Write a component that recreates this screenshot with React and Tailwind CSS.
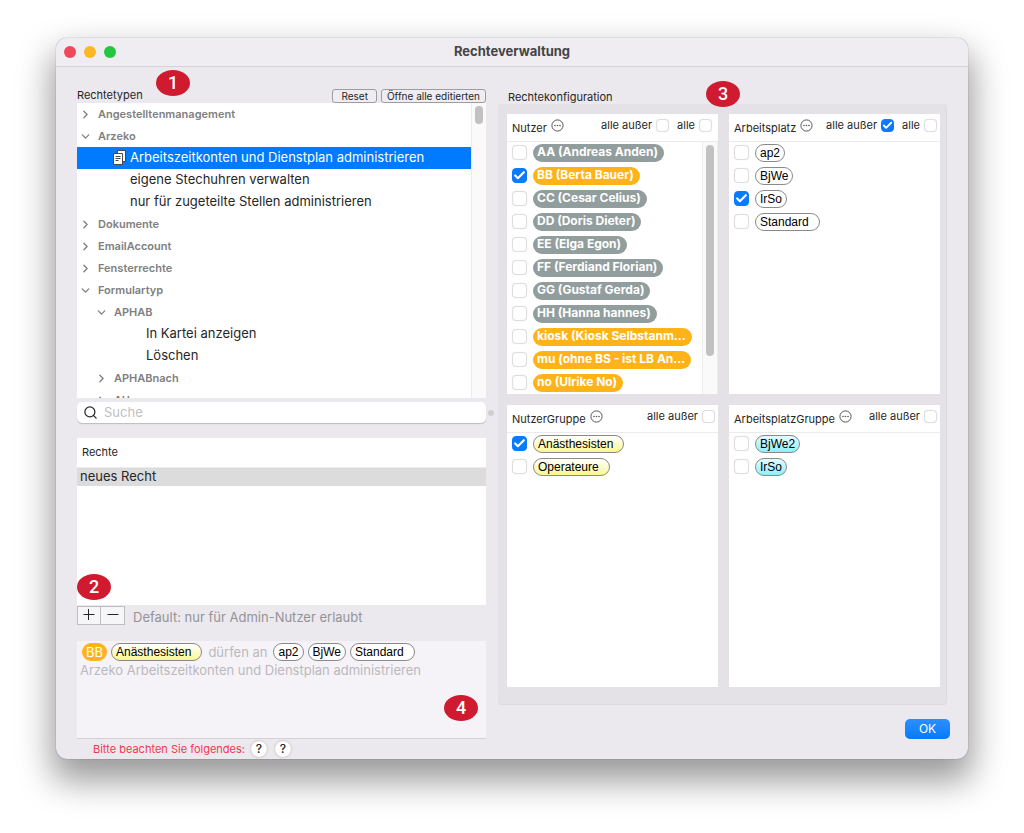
import { useState } from 'react'
import clsx from 'clsx'
import { Check, ChevronDown, ChevronRight, Search } from 'lucide-react'

const TREE = [
  { id: 'angestellte', label: 'Angestelltenmanagement', level: 0 },
  { id: 'arzeko', label: 'Arzeko', level: 0, open: true },
  { id: 'arbeitszeit', label: 'Arbeitszeitkonten und Dienstplan administrieren', level: 1, leaf: true, edited: true },
  { id: 'stechuhren', label: 'eigene Stechuhren verwalten', level: 1, leaf: true },
  { id: 'stellen', label: 'nur für zugeteilte Stellen administrieren', level: 1, leaf: true },
  { id: 'dokumente', label: 'Dokumente', level: 0 },
  { id: 'email', label: 'EmailAccount', level: 0 },
  { id: 'fenster', label: 'Fensterrechte', level: 0 },
  { id: 'formular', label: 'Formulartyp', level: 0, open: true },
  { id: 'aphab', label: 'APHAB', level: 1, open: true },
  { id: 'kartei', label: 'In Kartei anzeigen', level: 2, leaf: true },
  { id: 'loeschen', label: 'Löschen', level: 2, leaf: true },
  { id: 'aphabnach', label: 'APHABnach', level: 1 },
  { id: 'au', label: 'AU', level: 1 }
]

const NUTZER = [
  { label: 'AA (Andreas Anden)', tone: 'gray' },
  { label: 'BB (Berta Bauer)', tone: 'orange', checked: true },
  { label: 'CC (Cesar Celius)', tone: 'gray' },
  { label: 'DD (Doris Dieter)', tone: 'gray' },
  { label: 'EE (Elga Egon)', tone: 'gray' },
  { label: 'FF (Ferdiand Florian)', tone: 'gray' },
  { label: 'GG (Gustaf Gerda)', tone: 'gray' },
  { label: 'HH (Hanna hannes)', tone: 'gray' },
  { label: 'kiosk (Kiosk Selbstanm...', tone: 'orange' },
  { label: 'mu (ohne BS - ist LB An...', tone: 'orange' },
  { label: 'no (Ulrike No)', tone: 'orange' }
]

const ARBEITSPLATZ = [
  { label: 'ap2', tone: 'white' },
  { label: 'BjWe', tone: 'white' },
  { label: 'IrSo', tone: 'white', checked: true },
  { label: 'Standard', tone: 'white', wide: true }
]

const NUTZER_GRUPPE = [
  { label: 'Anästhesisten', tone: 'yellow', wide: true, checked: true },
  { label: 'Operateure', tone: 'yellow', wide: true }
]

const ARBEITSPLATZ_GRUPPE = [
  { label: 'BjWe2', tone: 'cyan' },
  { label: 'IrSo', tone: 'cyan' }
]

const TONES = {
  gray: 'pr-1.5 pb-px bg-[#929e9d] text-white font-bold',
  orange: 'pr-1.5 pb-px bg-[#ffb319] text-white font-bold',
  white: 'bg-white border border-[#8a8a8a] text-black font-["Liberation_Sans",sans-serif]',
  yellow: 'bg-linear-to-b from-white to-[#fbf68f] border border-[#8a8a8a] text-black font-["Liberation_Sans",sans-serif]',
  cyan: 'bg-linear-to-b from-[#e4fbff] to-[#8ceffb] border border-[#8a8a8a] text-black font-["Liberation_Sans",sans-serif]'
}

const Chip = ({ label, tone, wide }) => (
  <span
    className={clsx(
      'inline-flex items-center h-[18px] px-1 rounded-full text-xs whitespace-nowrap shrink-0',
      TONES[tone],
      wide && 'pr-2.5'
    )}
  >
    {label}
  </span>
)

const Checkbox = ({ label, small, ...props }) => (
  <span className={clsx('relative inline-flex shrink-0', small ? 'size-[13px]' : 'size-[15px]')}>
    <input
      type="checkbox"
      aria-label={label}
      className="peer appearance-none size-full rounded-[4px] bg-white border border-[#dedede] shadow-[0_0_1px_#00000022] checked:bg-[#0a7aff] checked:border-[#0a7aff]"
      {...props}
    />
    <Check strokeWidth={4} className="absolute inset-0 size-full p-px text-white pointer-events-none hidden peer-checked:block" />
  </span>
)

const MoreIcon = () => (
  <svg viewBox="0 0 13 13" className="size-[13px] text-[#555]" fill="none" stroke="currentColor">
    <circle cx="6.5" cy="6.5" r="5.6" />
    <g fill="currentColor" stroke="none">
      <circle cx="4" cy="6.5" r="0.8" />
      <circle cx="6.5" cy="6.5" r="0.8" />
      <circle cx="9" cy="6.5" r="0.8" />
    </g>
  </svg>
)

const DocsIcon = () => (
  <svg viewBox="0 0 13 15" className="w-[13px] h-[15px]" fill="white" stroke="#4a4a4a">
    <path d="M4.500 .5h8v11h-8z" />
    <path d="M.5 3.500h9v11h-9z" />
    <path d="M2.500 6.500h5M2.500 8.500h5M2.500 10.500h3" />
  </svg>
)

const Badge = ({ n, className }) => (
  <span
    className={clsx(
      'absolute z-10 flex items-center justify-center w-[34px] h-[26px] rounded-[50%] bg-[#cf1a30] text-white text-lg leading-none font-medium font-["Roboto",sans-serif]',
      className
    )}
  >
    {n}
  </span>
)

const ListBox = ({ title, items, others, all, scroll }) => (
  <section className="bg-white flex flex-col min-w-0">
    <header className={clsx('h-7 border-b border-[#ebebeb] flex items-center pl-[5px] text-[11px]', scroll ? 'pr-1.5' : 'pr-[3px]')}>
      <h3 className="pt-0.5">{title}</h3>
      <button aria-label={`${title} Optionen`} className="ml-1 mb-1"><MoreIcon /></button>
      <div className="ml-auto flex items-center gap-2 pb-1">
        <label className="flex items-center gap-1">
          alle außer
          <Checkbox small defaultChecked={others} />
        </label>
        {all && (
          <label className="flex items-center gap-1">
            alle
            <Checkbox small />
          </label>
        )}
      </div>
    </header>
    <div className="flex flex-1 min-h-0">
      <ul className="flex-1 min-w-0 pl-[5px] overflow-hidden">
        {items.map(item => (
          <li key={item.label} className="h-[23px] pb-0.5 flex items-center gap-1.5">
            <Checkbox label={item.label} defaultChecked={item.checked} />
            <Chip {...item} />
          </li>
        ))}
      </ul>
      {scroll && (
        <div className="w-4 bg-[#fafafa] border-x border-[#ebebeb] flex justify-center pt-[3px]">
          <div className="w-2 h-[211px] rounded-full bg-[#c1c1c1]" />
        </div>
      )}
    </div>
  </section>
)

const TreeRow = ({ item, selected, onSelect }) => {
  const Arrow = item.open ? ChevronDown : ChevronRight
  return (
    <li>
      <button
        onClick={() => onSelect(item.id)}
        className={clsx(
          'w-full h-[22px] flex items-center text-left whitespace-nowrap',
          item.level === 0 && 'pl-0.5',
          item.level === 1 && (item.leaf ? 'pl-9' : 'pl-[18px]'),
          item.level === 2 && 'pl-[52px]',
          item.leaf ? 'text-[13px]' : 'text-[11px] font-semibold text-[#808080]',
          selected && 'bg-[#007aff] text-white'
        )}
      >
        {item.leaf ? (
          <span className="w-[17px] pb-0.5 shrink-0">{item.edited && <DocsIcon />}</span>
        ) : (
          <Arrow size={13} strokeWidth={2.5} className="mr-1.5 shrink-0" />
        )}
        {item.label}
      </button>
    </li>
  )
}

const App = () => {
  const [selected, setSelected] = useState('arbeitszeit')

  return (
    <main className="bg-white px-14 pt-[38px] pb-[74px] font-['Inter',sans-serif] text-[#262626]">
      <div className="relative rounded-[11px] bg-[#ebe9ee] shadow-[0_0_1px_#00000099,0_18px_34px_4px_#00000066]">
        <header className="h-[29px] rounded-t-[11px] bg-[#efecf2] border-b border-[#d5d3d8] flex items-center px-2">
          <div className="flex flex-1 gap-2">
            <button aria-label="Schließen" className="size-3 rounded-full bg-[#f0475b]" />
            <button aria-label="Minimieren" className="size-3 rounded-full bg-[#fdb724]" />
            <button aria-label="Maximieren" className="size-3 rounded-full bg-[#23c840]" />
          </div>
          <h1 className="text-[13px] font-bold text-[#444]">Rechteverwaltung</h1>
          <div className="flex-1" />
        </header>

        <div className="grid grid-cols-[409fr_452fr] gap-3 pl-[21px] pr-[18px]">
          {/* Left column */}
          <div className="relative min-w-0 pt-[21px] flex flex-col">
            <Badge n={1} className="left-[79px] top-[3px]" />
            <div className="h-[15px] flex items-center justify-end gap-1 text-[10px]">
              <h2 className="mr-auto text-[11px]">Rechtetypen</h2>
              <button className="h-[14px] px-2 rounded-[3px] border border-[#9d9ca0] bg-[#efedf1] leading-none">Reset</button>
              <button className="h-[14px] px-[5px] rounded-[3px] border border-[#9d9ca0] bg-[#efedf1] leading-none">Öffne alle editierten</button>
            </div>

            <div className="h-[295px] bg-white flex overflow-hidden">
              <ul className="flex-1 min-w-0">
                {TREE.map(item => (
                  <TreeRow key={item.id} item={item} selected={item.id === selected} onSelect={setSelected} />
                ))}
              </ul>
              <div className="w-[15px] bg-[#fafafa] border-l border-[#ebebeb] pt-[3px] flex justify-center">
                <div className="w-2 h-[18px] rounded-full bg-[#c1c1c1]" />
              </div>
            </div>

            <label className="relative mt-1 h-[21px] rounded-[5px] bg-white shadow-[0_1px_1px_#00000033] flex items-center gap-1.5 px-1.5">
              <Search size={15} strokeWidth={2} />
              <input type="search" aria-label="Suche" placeholder="Suche" className="flex-1 min-w-0 text-[13px] outline-none placeholder:text-[#bfbfbf]" />
              <span className="absolute -right-2 top-2 size-[6px] rounded-full bg-[#d0ced2]" />
            </label>

            <div className="mt-[15px] h-[167px] bg-white">
              <table className="w-full text-left">
                <thead>
                  <tr className="h-[29px] border-b border-[#ebebeb]">
                    <th className="pl-[5px] text-[11px] font-normal">Rechte</th>
                  </tr>
                </thead>
                <tbody>
                  <tr className="h-[19px] bg-[#dcdcdc]">
                    <td className="pl-[3px] text-[13px] leading-none">neues Recht</td>
                  </tr>
                </tbody>
              </table>
            </div>
            <div className="relative flex items-center">
              <Badge n={2} className="left-0 bottom-[25px]" />
              <button aria-label="Hinzufügen" className="w-6 h-[19px] border border-[#bdbdbf] bg-[#f6f5f7] flex items-center justify-center">
                <svg viewBox="0 0 12 12" className="size-3" stroke="#262626"><path d="M.5 5.500h11M5.500 0v11" /></svg>
              </button>
              <button aria-label="Entfernen" className="w-6 h-[19px] border border-l-0 border-[#bdbdbf] bg-[#f6f5f7] flex items-center justify-center">
                <svg viewBox="0 0 12 12" className="size-3" stroke="#262626"><path d="M.5 5.500h11" /></svg>
              </button>
              <p className="ml-2 pt-1 text-[13px] leading-4 text-[#949396]">Default: nur für Admin-Nutzer erlaubt</p>
            </div>

            <div className="relative mt-4 h-[98px] pt-[2px] px-[3px] bg-[#f5f3f7] border-b border-[#d3d1d5] text-[13px] leading-[18px] text-[#bbb9bd]">
              <div className="flex items-center gap-1 pl-0.5">
                <span className="h-[18px] px-1 rounded-full bg-[#ffb319] text-white">BB</span>
                <Chip label="Anästhesisten" tone="yellow" wide />
                <span className="px-0.5">dürfen an</span>
                <Chip label="ap2" tone="white" />
                <Chip label="BjWe" tone="white" />
                <Chip label="Standard" tone="white" wide />
              </div>
              <p>Arzeko Arbeitszeitkonten und Dienstplan administrieren</p>
              <Badge n={4} className="right-2 bottom-[17px]" />
            </div>

            <div className="h-5 pl-4 flex items-center gap-2 text-[11px]">
              <span className="text-[#f0384f] -mr-0.5">Bitte beachten Sie folgendes:</span>
              <button aria-label="Hilfe 1" className="size-4 rounded-full bg-white shadow-[0_0_2px_#00000055] text-xs leading-none font-medium">?</button>
              <button aria-label="Hilfe 2" className="size-4 rounded-full bg-white shadow-[0_0_2px_#00000055] text-xs leading-none font-medium">?</button>
            </div>
          </div>

          {/* Right column */}
          <div className="relative min-w-0 pt-[21px] flex flex-col">
            <Badge n={3} className="left-[208px] top-[14px]" />
            <h2 className="h-4 pl-[10px] text-[11px] leading-[18px]">Rechtekonfiguration</h2>
            <div className="mr-[3px] grid grid-cols-2 grid-rows-[280px_282px] gap-[11px] pt-[10px] pb-[17px] pl-[9px] pr-1.5 rounded bg-[#e4e2e7] border-r border-b border-[#dcdae0]">
              <ListBox title="Nutzer" items={NUTZER} all scroll />
              <ListBox title="Arbeitsplatz" items={ARBEITSPLATZ} others all />
              <ListBox title="NutzerGruppe" items={NUTZER_GRUPPE} />
              <ListBox title="ArbeitsplatzGruppe" items={ARBEITSPLATZ_GRUPPE} />
            </div>
            <button className="mt-[14px] self-end w-[45px] h-5 rounded-[5px] bg-linear-to-b from-[#2b8fff] to-[#007aff] text-white text-xs">OK</button>
          </div>
        </div>
      </div>
    </main>
  )
}

export default App
